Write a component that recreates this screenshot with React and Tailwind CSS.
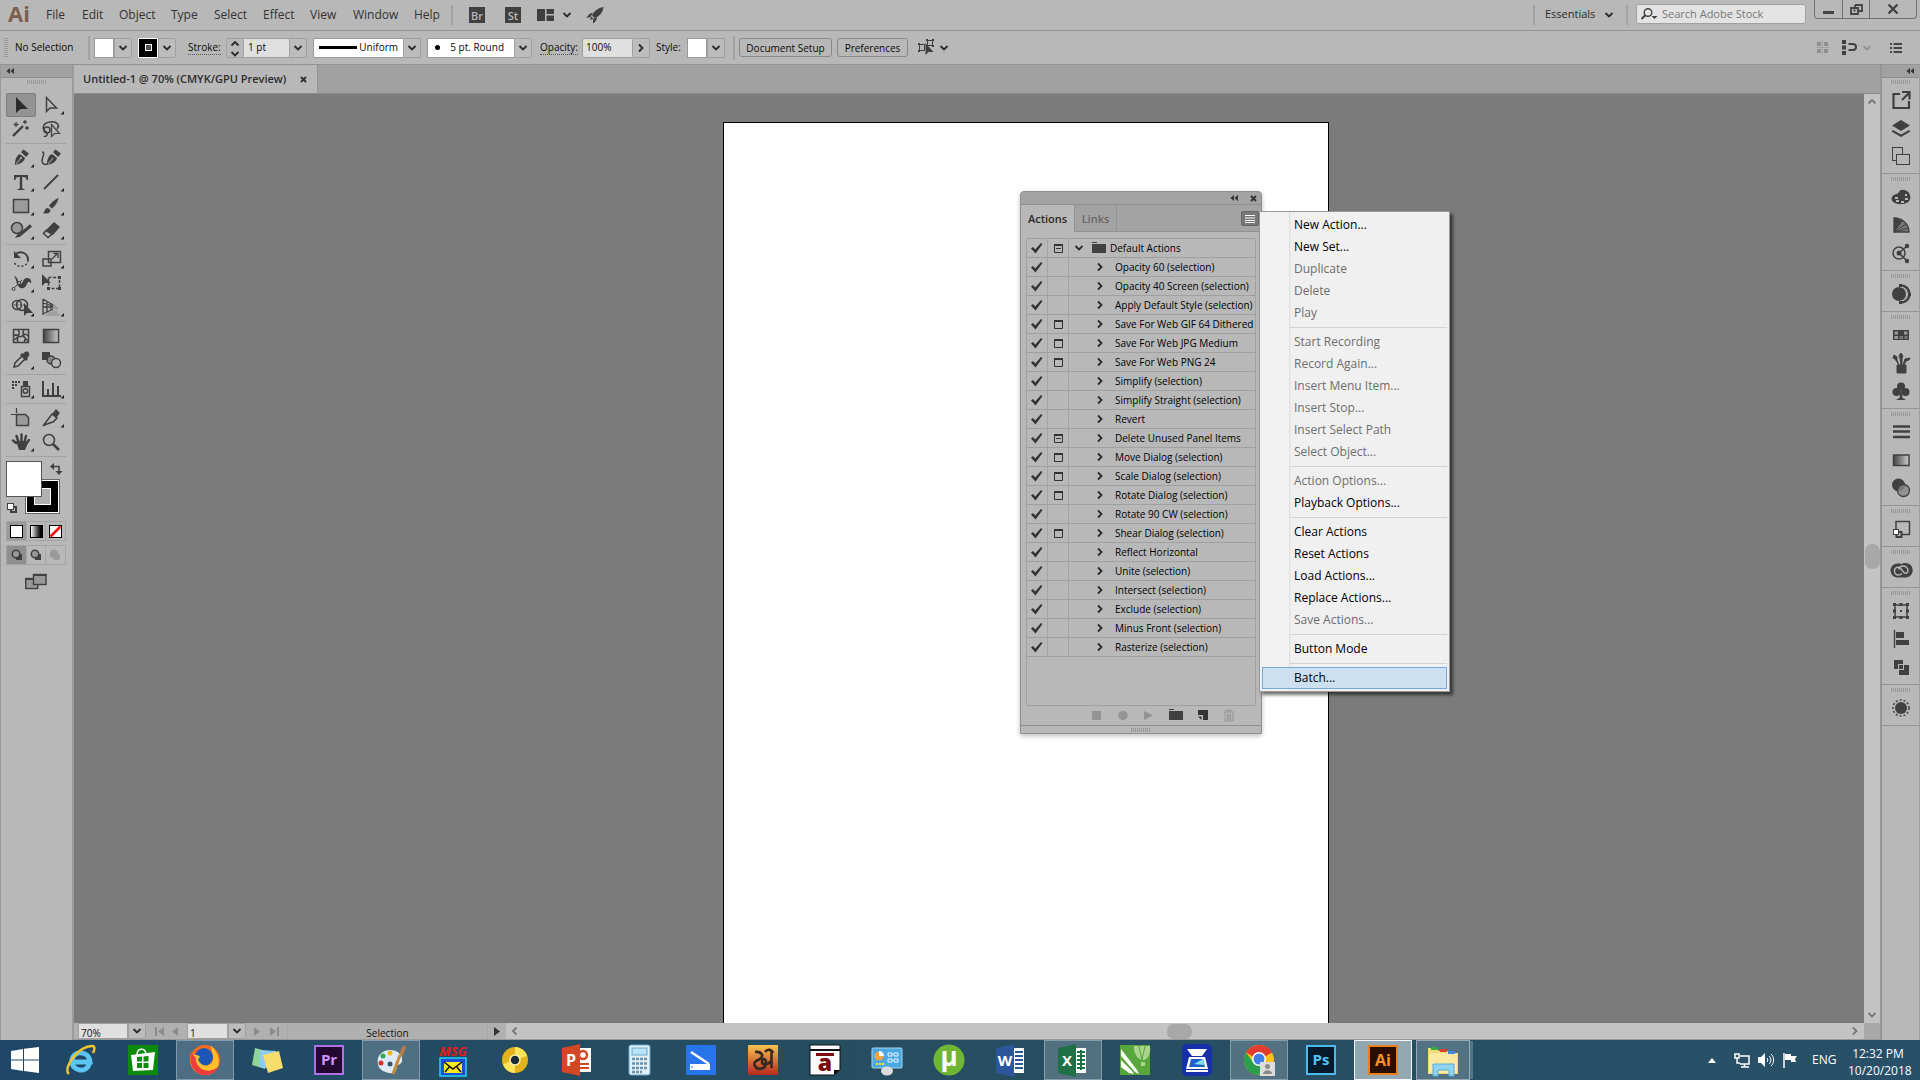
import React from "react";

const ink = "#404040";

function Svg({ w = 24, h = 24, className = "", children }) {
  return (
    <svg width={w} height={h} viewBox={`0 0 ${w} ${h}`} className={`shrink-0 overflow-visible ${className}`} fill="none" aria-hidden="true">
      {children}
    </svg>
  );
}

function Chevron({ dir = "down", color = "#2b2b2b" }) {
  const d = {
    down: "M1.5 3l3.5 3.5L8.5 3",
    up: "M1.5 6.500L5 3l3.500 3.500",
    right: "M3 1.500L6.500 5 3 8.500",
    left: "M6.500 1.500L3 5l3.500 3.500",
  }[dir];
  return (
    <Svg w={10} h={10}>
      <path d={d} stroke={color} strokeWidth="1.8" />
    </Svg>
  );
}

function DoubleLeft() {
  return (
    <Svg w={8} h={6}>
      <path d="M4 0v6L0.500 3zM8 0v6L4.500 3z" fill="#333" />
    </Svg>
  );
}

function Grip({ className = "" }) {
  return (
    <Svg w={20} h={4} className={className}>
      <path d="M0.5 0v4M2.5 0v4M4.5 0v4M6.500 0v4M8.500 0v4M10.500 0v4M12.500 0v4M14.500 0v4M16.500 0v4M18.500 0v4" stroke="#989898" />
    </Svg>
  );
}

function Sep({ className = "" }) {
  return <span className={`w-0.5 shrink-0 bg-[#a3a3a3] ${className}`} />;
}

/* ---------- Menu bar ---------- */

const menus = [
  ["File", "w-9"],
  ["Edit", "w-[37px]"],
  ["Object", "w-[52px]"],
  ["Type", "w-[43px]"],
  ["Select", "w-[49px]"],
  ["Effect", "w-[47px]"],
  ["View", "w-[43px]"],
  ["Window", "w-[61px]"],
  ["Help", "w-[37px]"],
];

function MenuBar() {
  return (
    <header className="flex h-[31px] shrink-0 items-start justify-between border-b border-[#939393] bg-[#b8b8b8]">
      <div className="flex h-[30px] items-center">
        <span className="w-[46px] pb-1 pl-2 text-[22px] leading-6 font-bold text-[#7d5f50]">Ai</span>
        <nav className="flex">
          {menus.map(([name, width]) => (
            <button key={name} className={`${width} text-left text-xs text-[#333]`}>{name}</button>
          ))}
        </nav>
        <Sep className="h-5" />
        <button className="ml-4 flex size-4 items-center justify-center bg-[#404040] text-[11px] leading-none font-semibold text-[#b8b8b8]">Br</button>
        <button className="ml-5 flex size-4 items-center justify-center bg-[#404040] text-[11px] leading-none font-semibold text-[#b8b8b8]">St</button>
        <button aria-label="Arrange documents" className="ml-4 flex items-center gap-2">
          <Svg w={17} h={12}>
            <path d="M0 0h8v12H0zM9.500 0H17v5H9.500zM9.500 6.500H17V12H9.500z" fill={ink} />
          </Svg>
          <Chevron />
        </button>
        <button aria-label="GPU performance" className="ml-3.5">
          <Svg w={18} h={18}>
            <path d="M17.500 1C12 2 8 5 6 9.500l2.500 2.500C14 10 17 6 17.500 1z" fill={ink} />
            <path d="M7 6.500C4 7 2 9 0.500 12l4-1zM11 11c0 3-1.500 5-4 6.500l0-4.500z" fill={ink} />
            <path d="M5 10.500L4 14l3.500-1.500z" fill={ink} />
          </Svg>
        </button>
      </div>
      <div className="flex items-start">
        <Sep className="mt-[5px] h-5" />
        <label className="relative mt-1 ml-2.5 flex h-5 items-center text-[11px] text-[#2b2b2b]">
          <select aria-label="Workspace" className="w-[69px] appearance-none bg-transparent leading-5">
            <option>Essentials</option>
          </select>
          <span className="pointer-events-none absolute top-1.5 right-0"><Chevron /></span>
        </label>
        <Sep className="mt-[5px] ml-3 h-5" />
        <label className="mt-1 ml-2 flex h-5 w-[170px] items-center rounded-[3px] border border-[#a0a0a0] bg-[#e3e3e3] pl-1">
          <Svg w={17} h={13}>
            <circle cx="7" cy="4.500" r="3.800" stroke={ink} strokeWidth="1.400" />
            <path d="M4.500 7L0.500 11" stroke={ink} strokeWidth="2" />
            <path d="M10.500 8h6l-3 3z" fill={ink} />
          </Svg>
          <input placeholder="Search Adobe Stock" className="ml-1 w-0 grow bg-transparent text-[11px] outline-none placeholder:text-[#777]" />
        </label>
        <div className="mr-[3px] ml-2 flex h-[19px] rounded-b border border-t-0 border-[#707070]">
          <button aria-label="Minimize" className="flex w-7 items-end justify-center border-r border-[#707070] pb-1">
            <span className="h-[3px] w-[11px] bg-[#444]" />
          </button>
          <button aria-label="Restore" className="flex w-[27px] items-center justify-center border-r border-[#707070]">
            <Svg w={13} h={11}>
              <path d="M5 1h7v6H8.500M5 1v2M1 4h7v6H1zM3.500 6.500h2" stroke="#444" strokeWidth="1.800" />
            </Svg>
          </button>
          <button aria-label="Close" className="flex w-[46px] items-center justify-center">
            <Svg w={12} h={10}>
              <path d="M1.500 0.500l9 9M10.500 0.500l-9 9" stroke="#444" strokeWidth="2.400" />
            </Svg>
          </button>
        </div>
      </div>
    </header>
  );
}

/* ---------- Control bar ---------- */

function Drop({ label, dir = "down" }) {
  return (
    <button aria-label={label} className="flex w-[18px] items-center justify-center rounded-r-[2px] border border-[#a0a0a0] bg-[#bcbcbc]">
      <Chevron dir={dir} />
    </button>
  );
}

function ControlBar() {
  return (
    <div className="flex h-[34px] shrink-0 items-center justify-between border-b border-[#939393] bg-[#b8b8b8] text-[10px] text-[#0a0a0a]">
      <div className="flex h-5 items-center">
        <Svg w={4} h={20} className="ml-1">
          <path d="M0 .5h4M0 2.500h4M0 4.500h4M0 6.500h4M0 8.500h4M0 10.500h4M0 12.500h4M0 14.500h4M0 16.500h4M0 18.500h4" stroke="#9a9a9a" />
        </Svg>
        <span className="w-20 pl-[7px] whitespace-nowrap">No Selection</span>
        <Sep className="-my-1 h-6" />
        <div className="ml-1 flex h-5">
          <button aria-label="Fill" className="w-5 border border-[#999] bg-white" />
          <Drop label="Fill options" />
        </div>
        <div className="ml-1.5 flex h-5">
          <button aria-label="Stroke colour" className="flex w-5 items-center justify-center border border-white bg-black">
            <span className="size-[7px] border border-white bg-[#555]" />
          </button>
          <Drop label="Stroke options" />
        </div>
        <label htmlFor="stroke" className="ml-3 w-[38px]"><span className="border-b border-dotted border-[#555]">Stroke:</span></label>
        <div className="flex h-5">
          <button aria-label="Adjust stroke" className="flex w-[18px] flex-col items-center justify-between rounded-l-[2px] border border-[#a0a0a0]">
            <Chevron dir="up" />
            <Chevron />
          </button>
          <input id="stroke" defaultValue="1 pt" className="w-[45px] border-y border-[#a0a0a0] bg-[#e0e0e0] px-1 outline-none" />
          <Drop label="Stroke weights" />
        </div>
        <div className="ml-1.5 flex h-5">
          <button className="flex w-[90px] items-center justify-between border border-r-0 border-[#999] bg-white px-[5px]">
            <span className="h-[3px] w-[38px] bg-black" />
            Uniform
          </button>
          <Drop label="Width profiles" />
        </div>
        <div className="ml-1.5 flex h-5">
          <button className="flex w-[87px] items-center justify-between border border-r-0 border-[#999] bg-white pr-2.5 pl-[7px]">
            <span className="size-[5px] rounded-full bg-black" />
            5 pt. Round
          </button>
          <Drop label="Brushes" />
        </div>
        <label htmlFor="opacity" className="ml-2 w-[42px]"><span className="border-b border-dotted border-[#555]">Opacity:</span></label>
        <div className="flex h-5">
          <input id="opacity" defaultValue="100%" className="w-[50px] rounded-l-[2px] border border-r-0 border-[#a0a0a0] bg-[#e0e0e0] px-[3px] outline-none" />
          <Drop label="Opacity slider" dir="right" />
        </div>
        <span className="ml-1.5 w-[31px]">Style:</span>
        <div className="flex h-5">
          <button aria-label="Graphic style" className="w-5 border border-[#999] bg-white" />
          <Drop label="Graphic styles" />
        </div>
        <Sep className="ml-2 h-6" />
        <button className="ml-1 h-[19px] w-[93px] rounded-[3px] border border-[#888] leading-none">Document Setup</button>
        <button className="ml-[5px] h-[19px] w-[71px] rounded-[3px] border border-[#888] leading-none">Preferences</button>
        <button aria-label="Select similar" className="ml-2.5 flex items-center gap-1">
          <Svg w={17} h={17}>
            <path d="M1.500 5.500h5v6h-5zM9.500 1.500h5v5h-5z" stroke={ink} />
            <path d="M0 4h2v2H0zM0 11h2v2H0zM8 0h2v2H8zM14 0h2v2h-2zM14 6h2v2h-2z" fill={ink} />
            <path d="M7.500 4v12l3-3h5z" fill={ink} />
          </Svg>
          <Chevron />
        </button>
      </div>
      <div className="flex items-center pr-[18px]">
        <Svg w={15} h={15}>
          <path d="M2 2h4v4H2zM9 2h4v4H9zM2 9h4v4H2zM9 9h4v4H9z" fill="#8e8e8e" />
          <path d="M7.500 0v15M0 7.500h15" stroke="#a2a2a2" />
        </Svg>
        <Svg w={16} h={15} className="ml-3">
          <path d="M0 0h4v4H0zM0 5.500h4v4H0zM0 11h4v4H0z" fill={ink} />
          <path d="M6.500 4H11a3 3 0 010 6H6.500" stroke={ink} strokeWidth="2" />
        </Svg>
        <span className="ml-1"><Chevron color="#909090" /></span>
        <Svg w={12} h={10} className="ml-[18px]">
          <path d="M0 1h2M0 5h2M0 9h2M3.500 1H12M3.500 5H12M3.500 9H12" stroke="#222" strokeWidth="1.400" />
        </Svg>
      </div>
    </div>
  );
}

/* ---------- Tools ---------- */

const s = { stroke: ink, strokeWidth: 1.5 };
const nib = "M6 19c0-5 1-9 5-11l5 4c-1 4-5 6-10 7zM12 6l2.500-2.500L20 7.500 17 11z";

const toolGroups = [
  [
    ["Selection", <path d="M7 4v16l4.500-4H19z" fill="#2b2b2b" />, 0],
    ["Direct selection", <path d="M7.500 4.500v14l3.500-3.500h6.500z" {...s} />, 1],
    ["Magic wand", <><path d="M4 19L14 9" {...s} strokeWidth="2.400" /><path d="M7 5v5M4.500 7.500h5M16 3v4M14 5h4M18 9v4M16 11h4" {...s} strokeWidth="1.300" /></>, 0],
    ["Lasso", <><path d="M8 15C3 14 2 6 11 5c8-1 10 4 7 7" {...s} /><circle cx="8" cy="13" r="3" {...s} /><path d="M8 16c1 3-2 4-3 3" {...s} /><path d="M12.500 7.500v12l3-3h5z" fill="#b8b8b8" {...s} strokeWidth="1.200" /></>, 0],
  ],
  [
    ["Pen", <><path d={nib} fill={ink} /><path d="M7 18l5-6" stroke="#b8b8b8" /><circle cx="12" cy="12" r="1" fill="#b8b8b8" /></>, 1],
    ["Curvature", <><g transform="translate(2 0)"><path d={nib} fill={ink} /><path d="M7 18l5-6" stroke="#b8b8b8" /></g><path d="M3 6c4 0 0 5 0 9 0 3 3 4 5 3" {...s} /></>, 0],
    ["Type", <path d="M5 5h14v5h-1.500c0-2-1-3-3-3h-1.300v10.500c0 1 1 1.500 2.300 1.500v1h-7v-1c1.300 0 2.300-.5 2.300-1.500V7H9.500c-2 0-3 1-3 3H5z" fill={ink} />, 1],
    ["Line segment", <path d="M5 19L19 5" {...s} strokeWidth="1.800" />, 1],
    ["Rectangle", <rect x="4.500" y="5.500" width="15" height="13" fill="#9b9b9b" {...s} />, 1],
    ["Paintbrush", <><path d="M19.500 4c-3 1-8 5-9.500 8l3 2.500c3-2 6-7 6.500-10.500z" fill={ink} /><path d="M4 19c2-1 1-5 5-5l2.500 2c0 4-5 4-7.500 3z" fill={ink} /></>, 1],
    ["Shaper", <><circle cx="8" cy="10" r="5.500" fill="#999" {...s} /><path d="M10 17.500l12-10" stroke={ink} strokeWidth="3" /><path d="M6 20l3-4.500 2.500 3z" fill={ink} /></>, 1],
    ["Eraser", <><path d="M7 12l8-8 6 5-7 8z" fill={ink} /><path d="M7 12.500l-2.500 3 4.500 4 4-3.500z" {...s} /></>, 1],
  ],
  [
    ["Rotate", <><path d="M6 8c4-5 13-3 13 5" {...s} strokeWidth="2" /><path d="M5 4v7h7z" fill={ink} /><path d="M19 13c0 7-11 9-14 2" {...s} strokeDasharray="2 2" /></>, 1],
    ["Scale", <><rect x="9.500" y="4.500" width="12" height="11" {...s} /><rect x="4" y="12" width="8" height="7" {...s} /><path d="M13 12l5-5M14.500 6.500H19V11" {...s} strokeWidth="1.300" /></>, 1],
    ["Width", <><path d="M5 5c5 1 4 9 7 8 2-1 2-6 6-6 3 0 5 2 4 6-1-3-3-3-4 0-2 5-6 5-8 3-3-2-2-7-5-11z" fill={ink} /><path d="M4 18l9-9" {...s} strokeWidth="1" /><circle cx="4.500" cy="18" r="1.500" fill="#b8b8b8" {...s} strokeWidth="1" /><circle cx="10" cy="12" r="1.500" fill="#b8b8b8" {...s} strokeWidth="1" /></>, 1],
    ["Free transform", <><rect x="9.500" y="6.500" width="11" height="11" {...s} strokeDasharray="3 1.500" /><path d="M3 3v12l3-3h6z" fill={ink} /><path d="M19 5h3v3h-3zM19 16h3v3h-3zM8 16h3v3H8z" fill={ink} /></>, 0],
    ["Shape builder", <><circle cx="8" cy="10" r="4.500" {...s} /><circle cx="13" cy="10" r="5.500" {...s} /><path d="M5 10h10" stroke={ink} strokeDasharray="1.500 1.500" /><path d="M15 8v13l3-3h6z" fill={ink} /></>, 1],
    ["Perspective grid", <><path d="M4 4v16M8 6v11M12 8v7M4 4l10 6M4 12h10M4 19l10-5M4 8l10 3" {...s} strokeWidth="1.300" /><path d="M12 16h6M9 18h10M7 20h14" stroke="#858585" strokeWidth="1.200" /><path d="M14 8l6 6h-6z" fill="#999" /></>, 1],
  ],
  [
    ["Mesh", <><rect x="4.500" y="5.500" width="15" height="13" {...s} /><path d="M5 12c3-4 5 3 8 0s4-2 6 0M9 6c4 4-3 8 0 12M15 6c-4 4 4 8 0 12M5 16l5-4M14 12l5 5" {...s} /></>, 0],
    ["Gradient", <rect x="4.500" y="5.500" width="15" height="13" fill="url(#tool-grad)" {...s} />, 0],
    ["Eyedropper", <><path d="M5 19l1-4 7-7 3 3-7 7z" {...s} /><path d="M11 7l2-2 1 1c2-3 5-3 6-1 1 1 0 4-2 5l1 1-2 2z" fill={ink} /></>, 1],
    ["Blend", <><rect x="3" y="4" width="8" height="8" fill={ink} /><circle cx="12" cy="12" r="4" fill="#888" {...s} /><circle cx="17" cy="15" r="4.500" fill="#b8b8b8" {...s} /></>, 0],
  ],
  [
    ["Symbol sprayer", <><path d="M3 4h2v2H3zM6 4h2v2H6zM9 4h2v2H9zM3 7h2v2H3zM6 7h2v2H6zM3 10h2v2H3z" fill={ink} /><path d="M12.500 9.500h8v10h-8z" {...s} /><path d="M14 4h5v5h-5z" fill={ink} /><circle cx="16.500" cy="14" r="2.200" {...s} /></>, 1],
    ["Column graph", <path d="M4 4v15h18M9 19v-7M14 19V6M19 19V9" {...s} strokeWidth="2" />, 1],
  ],
  [
    ["Artboard", <><path d="M7.500 8.500h9l3 3v8h-12z" fill="#9b9b9b" {...s} /><path d="M7.500 2v5M2 8.500h5" {...s} strokeWidth="1.200" /></>, 0],
    ["Slice", <><path d="M4 20L13 8l5 4-4 4c-3 1-7 2-10 4z" {...s} /><path d="M13 8l4-5 4 4-4 5z" fill={ink} /></>, 1],
    ["Hand", <><path d="M7 13l-3-2.500M9.500 12L7.500 6M12.500 11V4.500M15.500 12l1.500-6M17 14l3-4" stroke={ink} strokeWidth="2.400" strokeLinecap="round" /><path d="M7 11h10l2 2-3 7H10z" fill={ink} /></>, 1],
    ["Zoom", <><circle cx="10" cy="10" r="5.500" {...s} /><path d="M14 14l6 6" {...s} strokeWidth="2.600" /></>, 0],
  ],
];

function PanelHeader({ align }) {
  return (
    <div className={`flex h-[13px] w-full shrink-0 items-center border-b border-[#8f8f8f] bg-[#a1a1a1] px-[5px] ${align}`}>
      <button aria-label="Collapse panels" className="flex"><DoubleLeft /></button>
    </div>
  );
}

function Toolbar() {
  return (
    <aside className="flex w-[74px] shrink-0 flex-col border-r-2 border-l border-r-[#9b9b9b] border-l-[#999] bg-[#b8b8b8]">
      <PanelHeader align="justify-start" />
      <Grip className="mt-0.5 mb-[9px] self-center" />
      <div className="ml-[5px] w-[60px]">
        {toolGroups.map((group, i) => (
          <div key={i} className="mb-0.5 grid grid-cols-2 border-b border-[#a2a2a2] pb-0.5">
            {group.map(([name, art, more], j) => (
              <button
                key={name}
                aria-label={name}
                className={i === 0 && j === 0 ? "h-6 rounded-[2px] bg-[#939393] outline outline-1 -outline-offset-1 outline-[#7f7f7f]" : "h-6"}
              >
                <Svg w={30} h={24}>
                  <g transform="translate(3 0)">{art}</g>
                  {more === 1 && <path d="M28 18v3.500h-3.500z" fill="#222" />}
                </Svg>
              </button>
            ))}
          </div>
        ))}
        <Svg w={60} h={56}>
          <rect x="19.500" y="20.500" width="34" height="34" fill="#000" stroke="#666" />
          <rect x="20.500" y="21.500" width="32" height="32" stroke="#fff" />
          <rect x="28.500" y="29.500" width="16" height="16" fill="#b0b0b0" stroke="#fff" />
          <rect x="0.500" y="2.500" width="35" height="35" fill="#fff" stroke="#555" />
          <path d="M47 7.500h6v5" stroke={ink} strokeWidth="1.600" />
          <path d="M48 4v7l-4-3.500zM49.500 12h7L53 16z" fill={ink} />
          <rect x="5" y="48" width="5" height="5" stroke={ink} strokeWidth="2" />
          <rect x="1.500" y="44.500" width="6" height="6" fill="#fff" stroke={ink} />
        </Svg>
        <div className="mt-1.5 flex h-5 border border-[#a4a4a4]">
          <button aria-label="Color" className="flex w-[19px] items-center justify-center bg-[#999]"><span className="size-[13px] border border-black bg-white" /></button>
          <button aria-label="Gradient fill" className="flex w-5 items-center justify-center border-x border-[#a8a8a8]"><span className="size-[13px] border border-black bg-linear-to-r from-white to-black" /></button>
          <button aria-label="No fill" className="flex w-[19px] items-center justify-center">
            <Svg w={13} h={13}>
              <rect x=".5" y=".5" width="12" height="12" fill="#fff" stroke="#000" />
              <path d="M1.500 11.500l10-10" stroke="#e11" strokeWidth="2.600" />
            </Svg>
          </button>
        </div>
        <div className="mt-1 flex h-5 border border-[#a4a4a4]">
          {[["Draw normal", "bg-[#8f8f8f]", ink], ["Draw behind", "border-x border-[#a8a8a8]", ink], ["Draw inside", "", "#9c9c9c"]].map(([name, cls, c]) => (
            <button key={name} aria-label={name} className={`flex w-5 items-center justify-center ${cls}`}>
              <Svg w={12} h={12}>
                <rect x="5" y="5" width="6" height="6" fill={c} />
                <circle cx="5" cy="5" r="3.700" fill="#999" stroke={c} strokeWidth="1.500" />
              </Svg>
            </button>
          ))}
        </div>
        <button aria-label="Screen mode" className="mx-auto mt-2 block">
          <Svg w={22} h={17}>
            <rect x=".7" y="5.500" width="12" height="10" fill="#999" stroke={ink} strokeWidth="1.400" />
            <rect x="8.500" y="1.500" width="12.500" height="10" fill="#999" stroke={ink} strokeWidth="1.400" />
            <path d="M8 2h13.500M0 6h8" stroke={ink} strokeWidth="2" />
          </Svg>
        </button>
      </div>
      <svg width="0" height="0" className="absolute" aria-hidden="true">
        <defs>
          <linearGradient id="tool-grad"><stop stopColor="#444" /><stop offset="1" stopColor="#ccc" /></linearGradient>
        </defs>
      </svg>
    </aside>
  );
}

/* ---------- Right dock ---------- */

const dockGroups = [
  [
    ["Export", <path d="M9 4H2.500v14H18v-7M11 2h7.500v7.500M18 3l-7 7" stroke={ink} strokeWidth="2.200" />],
    ["Layers", <path d="M10 2l9 5.500-9 5.500-9-5.500zM2 12l8 4.500 8-4.500 1.500 1.500L10 19 .5 13.500z" fill={ink} />],
    ["Artboards", <><rect x="1.500" y="1.500" width="10" height="13" stroke={ink} /><rect x="5.500" y="8.500" width="13" height="10" fill="#b8b8b8" stroke={ink} /></>],
  ],
  [
    ["Color", <><path d="M8 5c1-3 7-3 10 1 3 5 1 10-6 11C4 18-1 14 1 10c1-3 5-2 7-5z" fill={ink} /><path d="M4 10h3v2H4zM5 13h3v2H5zM10 14h3v2h-3zM14 11h3v2h-3zM14 7h2v2h-2z" fill="#b8b8b8" /></>],
    ["Color guide", <><path d="M3 3c8 0 15 6 15 14H3z" fill="#777" stroke={ink} strokeWidth="1.300" /><path d="M3 17V3l4 1zM3 17L7 4l4 2z" fill={ink} /><path d="M3 17L11 6M3 17L15 9M3 17l15-4" stroke={ink} /></>],
    ["Color themes", <><circle cx="8" cy="10" r="6" stroke={ink} strokeWidth="1.500" /><circle cx="8" cy="10" r="2.500" fill={ink} /><path d="M8 10l8-7M8 10l8 8" stroke={ink} strokeWidth="1.500" /><circle cx="16" cy="3" r="2.200" fill={ink} /><circle cx="16" cy="18" r="2.200" fill={ink} /></>],
  ],
  [
    ["Recolor", <><circle cx="8" cy="10" r="7" fill={ink} /><path d="M9 2c12 0 12 16 0 16" stroke={ink} strokeWidth="3.500" /><path d="M9 3c10 0 10 14 0 14" stroke="#b8b8b8" strokeWidth="1.200" /><path d="M8 0h3v3H8zM17 9h3v3h-3zM8 17h3v3H8z" fill={ink} /></>],
  ],
  [
    ["Swatches", <><path d="M2 5h16v10H2z" fill={ink} /><path d="M3.500 6.500h3.500v3H3.500zM3.500 11H7v3H3.500zM13 6.500h3.500v3H13z" fill="#999" /><path d="M8.500 11H12v3H8.500zM13.500 11h3v3h-3z" fill="#777" /></>],
    ["Brushes", <path d="M6 12h9v8H6zM8 12L4 6 2 5l1-3 3 2 0 3zM10 12L9 5l-1-2 2-3 2 3-1 2 0 6zM12 12l2-6 5-1-1 2-3 1-2 4z" fill={ink} stroke={ink} />],
    ["Symbols", <><circle cx="10" cy="5.500" r="4" fill={ink} /><circle cx="5.500" cy="11" r="4" fill={ink} /><circle cx="14.500" cy="11" r="4" fill={ink} /><path d="M9.500 9h1l1 8 3 1.500v.5h-9v-.5l3-1.500z" fill={ink} /></>],
  ],
  [
    ["Stroke", <path d="M2 4.500h17M2 9.500h17M2 15h17" stroke={ink} strokeWidth="2.400" />],
    ["Gradient", <rect x="2.500" y="5" width="15.500" height="10.500" fill="url(#tool-grad)" stroke={ink} strokeWidth="1.500" />],
    ["Transparency", <><circle cx="7.500" cy="7" r="6.500" fill={ink} /><circle cx="12.500" cy="12.500" r="6" fill="#888" fillOpacity=".8" stroke={ink} strokeWidth="1.300" /></>],
  ],
  [
    ["Appearance", <><path d="M5 10V2.500h13.500v13H11" stroke={ink} strokeWidth="1.500" /><rect x="5.500" y="13" width="5" height="5" stroke={ink} strokeWidth="2" /><rect x="2.500" y="10.500" width="5" height="5" fill="#fff" stroke={ink} /></>],
  ],
  [
    ["Libraries", <><path d="M6.500 3.500a7 7 0 000 14h8a7 7 0 000-14.500c-2 0-3 .5-4 1-1-.4-2-.5-4-.5z" fill={ink} /><path d="M11 13.500c-2 2-7 2.500-7.500-2S8 6 10 9l3 3.500c1.500 1.500 4 .5 4-2s-2.500-4.500-5-4.500-4 2-4.500 3.500" stroke="#b8b8b8" strokeWidth="1.400" /></>],
  ],
  [
    ["Transform", <><rect x="4" y="4" width="12" height="12" stroke={ink} strokeWidth="1.500" /><path d="M2 2h3v3H2zM8.500 2h3v3h-3zM15 2h3v3h-3zM2 8.500h3v3H2zM15 8.500h3v3h-3zM2 15h3v3H2zM8.500 15h3v3h-3zM15 15h3v3h-3zM9 9h2v2H9z" fill={ink} /></>],
    ["Align", <><path d="M3.500 1v18" stroke={ink} strokeWidth="1.400" /><path d="M5 3h8v6H5zM5 11h13v5H5z" fill={ink} /></>],
    ["Pathfinder", <><path d="M3 3h9v4h-5v5H3zM13 8h5v10H8v-5h5z" fill={ink} /><path d="M8 8h4v4H8z" fill={ink} /></>],
  ],
  [
    ["Graphic styles", <><circle cx="10" cy="10" r="6" fill={ink} /><circle cx="10" cy="10" r="8" stroke={ink} strokeWidth="1.500" strokeDasharray="2 2" /></>],
  ],
];

function Dock() {
  return (
    <aside className="flex w-10 shrink-0 flex-col items-center border-r border-l-2 border-r-[#a0a0a0] border-l-[#959595] bg-[#b8b8b8]">
      <PanelHeader align="justify-end" />
      {dockGroups.map((group, i) => (
        <div key={i} className={i === 0 ? "flex w-full flex-col items-center border-b border-[#959595] pt-0.5 pb-[3px]" : "flex w-full flex-col items-center border-b border-[#959595] py-[3px]"}>
          <Grip className="mb-0.5" />
          {group.map(([name, art]) => (
            <button key={name} aria-label={name} className="flex h-7 items-center justify-center">
              <Svg w={20} h={20}>{art}</Svg>
            </button>
          ))}
        </div>
      ))}
    </aside>
  );
}

/* ---------- Document ---------- */

function Document() {
  return (
    <main className="flex min-w-0 grow flex-col">
      <div className="flex h-[29px] shrink-0 border-b border-[#8b8b8b] bg-[#a1a1a1]">
        <div className="flex w-[244px] items-center justify-between border-r border-[#959595] bg-[#b8b8b8] pt-px pr-2.5 pl-[9px] text-[11px] font-semibold whitespace-nowrap text-[#2b2b2b]">
          Untitled-1 @ 70% (CMYK/GPU Preview)
          <button aria-label="Close document">
            <Svg w={7} h={7}><path d="M1 1l5 5M6 1L1 6" stroke="#333" strokeWidth="2" /></Svg>
          </button>
        </div>
      </div>
      <div className="flex min-h-0 grow">
        <div className="relative grow overflow-hidden bg-[#7b7b7b]">
          <div className="absolute top-7 bottom-0 left-[649px] w-[606px] border border-b-0 border-black bg-white" />
        </div>
        <div className="flex w-4 shrink-0 flex-col items-center justify-between bg-[#c3c3c3] py-[3px]">
          <button aria-label="Scroll up"><Chevron dir="up" color="#777" /></button>
          <span className="mb-1 h-[25px] w-[15px] rounded-[7px] bg-[#a8a8a8]" />
          <button aria-label="Scroll down"><Chevron color="#777" /></button>
        </div>
      </div>
      <div className="flex h-[17px] shrink-0 items-stretch overflow-hidden border-b border-[#999] bg-[#b0b0b0] text-[10px] text-[#111]">
        <input aria-label="Zoom level" defaultValue="70%" className="ml-1 w-[50px] border border-[#a0a0a0] bg-[#e0e0e0] px-0.5 pt-1 leading-none outline-none" />
        <Drop label="Zoom levels" />
        <div className="flex w-[41px] items-center justify-center gap-2">
          <Svg w={9} h={9}><path d="M1 0v9" stroke="#8c8c8c" strokeWidth="2" /><path d="M9 0v9L3 4.500z" fill="#8c8c8c" /></Svg>
          <Svg w={6} h={9}><path d="M6 0v9L0 4.500z" fill="#8c8c8c" /></Svg>
        </div>
        <input aria-label="Artboard number" defaultValue="1" className="w-[41px] border border-[#a0a0a0] bg-[#e0e0e0] px-0.5 pt-1 leading-none outline-none" />
        <Drop label="Artboards" />
        <div className="flex w-[42px] items-center justify-center gap-2.5 border-r border-[#a8a8a8]">
          <Svg w={6} h={9}><path d="M0 0v9l6-4.500z" fill="#8c8c8c" /></Svg>
          <Svg w={9} h={9}><path d="M8 0v9" stroke="#8c8c8c" strokeWidth="2" /><path d="M0 0v9l6-4.500z" fill="#8c8c8c" /></Svg>
        </div>
        <div className="flex w-[200px] items-end justify-center border-r border-[#a8a8a8] leading-3">Selection</div>
        <button aria-label="Status options" className="flex w-[18px] items-center justify-center">
          <Svg w={6} h={9}><path d="M0 0v9l6-4.500z" fill="#333" /></Svg>
        </button>
        <div className="flex grow items-center justify-between bg-[#c3c3c3] px-1">
          <button aria-label="Scroll left"><Chevron dir="left" color="#777" /></button>
          <span className="mr-3 h-[15px] w-[25px] rounded-[7px] bg-[#a8a8a8]" />
          <button aria-label="Scroll right"><Chevron dir="right" color="#777" /></button>
        </div>
        <div className="w-4 shrink-0 bg-[#a9a9a9]" />
      </div>
    </main>
  );
}

/* ---------- Actions panel ---------- */

const actions = [
  ["Opacity 60 (selection)", 0],
  ["Opacity 40 Screen (selection)", 0],
  ["Apply Default Style (selection)", 0],
  ["Save For Web GIF 64 Dithered", 1],
  ["Save For Web JPG Medium", 1],
  ["Save For Web PNG 24", 1],
  ["Simplify (selection)", 0],
  ["Simplify Straight (selection)", 0],
  ["Revert", 0],
  ["Delete Unused Panel Items", 2],
  ["Move Dialog (selection)", 1],
  ["Scale Dialog (selection)", 1],
  ["Rotate Dialog (selection)", 1],
  ["Rotate 90 CW (selection)", 0],
  ["Shear Dialog (selection)", 1],
  ["Reflect Horizontal", 0],
  ["Unite (selection)", 0],
  ["Intersect (selection)", 0],
  ["Exclude (selection)", 0],
  ["Minus Front (selection)", 0],
  ["Rasterize (selection)", 0],
];

function Folder() {
  return (
    <Svg w={14} h={12}>
      <path d="M0 2h14v9H0zM0 0h5v1H0z" fill={ink} />
    </Svg>
  );
}

function ActionRow({ name, dialog, root }) {
  return (
    <li className="flex h-[19px] border-b border-[#a0a0a0]">
      <label className="flex w-[21px] items-center justify-center border-r border-[#a4a4a4]">
        <input type="checkbox" defaultChecked aria-label={`Include ${name}`} className="peer sr-only" />
        <Svg w={12} h={11} className="opacity-0 peer-checked:opacity-100">
          <path d="M0 5.500l2-1.500 2.200 2.500L10 0l1.500 1L4.500 10.500z" fill="#333" />
        </Svg>
      </label>
      <label className="flex w-[21px] items-center justify-center border-r border-[#a4a4a4]">
        <input type="checkbox" defaultChecked={dialog > 0} aria-label={`Show dialog for ${name}`} className="peer sr-only" />
        <Svg w={9} h={9} className="opacity-0 peer-checked:opacity-100">
          <path d="M.5 1v7.500h8V1" stroke="#333" />
          <path d="M0 1h9" stroke="#333" strokeWidth="2" />
          {dialog === 2 && <path d="M2 4.500h5" stroke="#333" />}
        </Svg>
      </label>
      {root ? (
        <button className="flex grow items-center pl-[5px] text-left"><Chevron /><span className="mr-1 ml-2"><Folder /></span>{name}</button>
      ) : (
        <button className="flex grow items-center gap-2.5 pl-[26px] text-left whitespace-nowrap"><Chevron dir="right" />{name}</button>
      )}
    </li>
  );
}

function ActionsPanel() {
  return (
    <section aria-label="Actions" className="absolute top-[191px] left-[1020px] w-[242px] rounded-t-[4px] border border-[#8f8f8f] bg-[#b8b8b8] text-[10px] text-black shadow-[0_2px_5px_rgba(0,0,0,0.25)]">
      <div className="flex h-[13px] items-center justify-end gap-3 rounded-t-[3px] border-b border-[#8f8f8f] bg-[#a3a3a3] pr-1">
        <button aria-label="Collapse"><DoubleLeft /></button>
        <button aria-label="Close"><Svg w={7} h={7}><path d="M1 1l5 5M6 1L1 6" stroke="#333" strokeWidth="2" /></Svg></button>
      </div>
      <div className="flex h-[27px] items-stretch bg-[#a3a3a3] text-[11px] leading-none font-semibold">
        <button className="w-[53px] bg-[#b8b8b8] pb-px text-[#2b2b2b]">Actions</button>
        <button className="w-[43px] border-r border-b border-l border-[#939393] text-[#666]">Links</button>
        <div className="flex grow items-start justify-end border-b border-[#939393] pt-1.5 pr-0.5">
          <button aria-label="Panel menu" className="flex h-[15px] w-[18px] items-center justify-center rounded-[2px] border border-[#666] bg-[#777]">
            <Svg w={10} h={8}><path d="M0 .5h10M0 3h10M0 5.500h10M0 7.500h10" stroke="#fff" /></Svg>
          </button>
        </div>
      </div>
      <ul className="mt-1.5 mr-[5px] ml-[5px] h-[468px] rounded-[2px] border border-[#a0a0a0]">
        <ActionRow name="Default Actions" dialog={2} root />
        {actions.map(([name, dialog]) => (
          <ActionRow key={name} name={name} dialog={dialog} />
        ))}
      </ul>
      <div className="flex h-5 items-center justify-end gap-[14px] border-b border-[#8f8f8f] pr-[26px] pb-px">
        <button aria-label="Stop"><Svg w={12} h={12}><path d="M1 2h9v9H1z" fill="#949494" /></Svg></button>
        <button aria-label="Record"><Svg w={12} h={12}><circle cx="6" cy="6.500" r="4.700" fill="#949494" /></Svg></button>
        <button aria-label="Play"><Svg w={12} h={12}><path d="M1 2v9l9-4.500z" fill="#949494" /></Svg></button>
        <button aria-label="New set"><Folder /></button>
        <button aria-label="New action"><Svg w={12} h={12}><path d="M1 1h10v10H6V6H1z" fill="#333" /><path d="M1 7.500h3.500V11z" fill="#333" /></Svg></button>
        <button aria-label="Delete selection"><Svg w={12} h={13}><path d="M1 3h10M4 3V1h4v2M2 3v9h8V3M4.500 5v6M6 5v6M7.500 5v6" stroke="#949494" /></Svg></button>
      </div>
      <div className="flex h-[7px] items-center justify-center"><Grip /></div>
    </section>
  );
}

const menuGroups = [
  [["New Action...", 1], ["New Set...", 1], ["Duplicate", 0], ["Delete", 0], ["Play", 0]],
  [["Start Recording", 0], ["Record Again...", 0], ["Insert Menu Item...", 0], ["Insert Stop...", 0], ["Insert Select Path", 0], ["Select Object...", 0]],
  [["Action Options...", 0], ["Playback Options...", 1]],
  [["Clear Actions", 1], ["Reset Actions", 1], ["Load Actions...", 1], ["Replace Actions...", 1], ["Save Actions...", 0]],
  [["Button Mode", 1]],
  [["Batch...", 2]],
];

function PanelMenu() {
  const tone = [
    "text-[#6d6d6d] border-transparent",
    "text-black border-transparent",
    "text-black border-[#78a8dc] bg-[#cde0f2]",
  ];
  return (
    <div role="menu" className="absolute top-[211px] left-[1259px] w-[191px] border border-[#979797] bg-[#f0f0f0] bg-linear-to-r from-[#f2f2f2] from-[29px] via-[#dcdcdc] via-[29px] to-[#f0f0f0] to-[31px] p-0.5 text-xs shadow-[3px_3px_3px_rgba(0,0,0,0.55)]">
      {menuGroups.map((group, i) => (
        <div key={i} role="group">
          {i > 0 && <div className="ml-7 h-[7px] pt-[3px]"><div className="h-px bg-[#d4d4d4]" /></div>}
          {group.map(([name, state]) => (
            <button key={name} role="menuitem" disabled={state === 0} className={`block h-[22px] w-full border pl-[31px] text-left leading-5 ${tone[state]}`}>
              {name}
            </button>
          ))}
        </div>
      ))}
    </div>
  );
}

/* ---------- Taskbar ---------- */

function Tile({ x = 2, y = 2, w = 28, h = 28, fill, stroke, text, color, size = 15 }) {
  return (
    <>
      <rect x={x} y={y} width={w} height={h} fill={fill} stroke={stroke} strokeWidth={stroke ? 2 : 0} />
      <text x={x + w / 2} y={y + h / 2 + size * 0.36} textAnchor="middle" fontSize={size} fontWeight="700" fill={color}>{text}</text>
    </>
  );
}

function OfficeApp({ color, letter, rows }) {
  return (
    <>
      <path d="M17 4h12v25H17z" fill="#fff" />
      <path d={rows} stroke={color} strokeWidth="2" />
      <path d="M1 4l18-4v33L1 29z" fill={color} />
      <text x="10" y="22" textAnchor="middle" fontSize="15" fontWeight="700" fill="#fff">{letter}</text>
    </>
  );
}

const apps = [
  ["Internet Explorer", "", <><path d="M24 20c-2 9-17 8-17-3S24 6 25 18H9" stroke="#5cc5f2" strokeWidth="5" /><path d="M4 30C-3 24 14 2 27 2c4 0 2 5 1 7" stroke="#f2c230" strokeWidth="2.500" /></>],
  ["Store", "", <><rect x="1" y="1" width="30" height="30" fill="#0b8a0b" /><path d="M4 11l24-3-2 18-20 1z" fill="#fff" /><path d="M10 11c0-7 8-8 9-1" stroke="#fff" strokeWidth="1.500" /><path d="M10 13l5-.5v5h-5zM16.500 12.500l5-.5v5.500h-5zM10 19h5v5h-5zM16.500 19h5v5h-5z" fill="#0b8a0b" /></>],
  ["Firefox", "open", <><circle cx="16" cy="16" r="15" fill="#f36b21" /><circle cx="15" cy="13" r="9" fill="#1d55b8" /><path d="M22 2c12 10 10 28-5 29C4 31-1 20 2 8c2 3 3 3 6 3 3 1 4 2 1 4 3 9 13 8 15 1 1-5-2-9-2-14z" fill="#ffbf2b" /><path d="M2 8c-3 14 5 24 15 23 6 0 11-4 13-9-6 6-17 7-22-2-2-4 0-6-3-8z" fill="#ef3b3b" /></>],
  ["Sticky Notes", "", <><path d="M4 4l15 4-5 17-13-4z" fill="#8fd694" /><path d="M9 6l16 1-2 18-15-2z" fill="#8ecdf0" /><path d="M12 11l16-4 4 17-15 5z" fill="#f7dd6c" /></>],
  ["Premiere Pro", "", <Tile fill="#24082f" stroke="#b070e8" text="Pr" color="#d392ff" />],
  ["Paint", "open", <><path d="M3 14C7 3 25 4 27 14c1 6-3 6-5 8 0 9-8 8-14 5-5-3-6-8-5-13z" fill="#dcebf7" /><circle cx="8" cy="12" r="2.500" fill="#2fa84f" /><circle cx="15" cy="9" r="2.500" fill="#efb51e" /><circle cx="6" cy="19" r="2.500" fill="#d6332b" /><circle cx="15" cy="20" r="2.500" fill="#38566b" /><path d="M18 30l7-19" stroke="#c98a3c" strokeWidth="3" /><path d="M24 10l4-9 3 2-3 9z" fill="#b57a4a" /></>],
  ["MSG", "", <><text x="16" y="12" textAnchor="middle" fontSize="13" fontStyle="italic" fontWeight="700" fill="#e31b1b">MSG</text><rect x="3" y="14" width="26" height="18" fill="#1d4fd6" stroke="#1fd6f2" strokeWidth="1.500" /><path d="M7 18h18v11H7z" fill="#f6ec1f" /><path d="M7 18l9 7 9-7M8 28l5-6M24 28l-5-6" stroke="#111" strokeWidth="1.500" /></>],
  ["Disc", "", <><circle cx="16" cy="16" r="13" fill="#e3b21d" /><path d="M16 3a13 13 0 0112 9L16 16zM16 29a13 13 0 01-12-9l12-4z" fill="#fbe45a" /><circle cx="16" cy="16" r="5" fill="#1c2c38" stroke="#fff3b0" strokeWidth="1.500" /></>],
  ["PowerPoint", "", <><path d="M15 4h15v24H15z" fill="#fff" /><circle cx="22" cy="11" r="4" stroke="#d24726" strokeWidth="2.500" /><path d="M19 20h9M19 24h9" stroke="#d24726" strokeWidth="2" /><path d="M1 4l18-4v32L1 28z" fill="#d24726" /><text x="10" y="22" textAnchor="middle" fontSize="16" fontWeight="700" fill="#fff">P</text></>],
  ["Calculator", "", <><rect x="6" y="1" width="21" height="30" rx="2" fill="#e3f0f8" stroke="#6ba5cc" /><rect x="9" y="4" width="15" height="7" fill="#b9e3f7" stroke="#6ba5cc" /><path d="M9 15h15M9 19.500h15M9 24h15M9 28h10" stroke="#6a93ab" strokeWidth="2.500" strokeDasharray="3 1" /></>],
  ["Scanner", "", <><rect x="1" y="1" width="30" height="30" fill="#2874ea" /><path d="M6 8l18 12" stroke="#fff" strokeWidth="2.400" /><path d="M5 20h20v6H5z" fill="#fff" /><path d="M6 23h2" stroke="#2874ea" /></>],
  ["Bangla keyboard", "", <><rect x="1" y="1" width="30" height="30" rx="1" fill="url(#bk)" /><path d="M8 8c7-1 9 4 5 7-4 2-7 3-5 7 3 5 11 3 11-3 0-5-4-5-4-1 0 3 5 4 9-1M18 8c3-4 7-2 8 1M24.500 7v17" stroke="#352a22" strokeWidth="2.600" /></>],
  ["Font keyboard", "", <><path d="M1 1h30v25l-6 5H1z" fill="#fff" stroke="#111" /><path d="M1 6h30" stroke="#111" strokeWidth="2" /><path d="M7 10.500h18" stroke="#7a0c10" strokeWidth="3" /><text x="16" y="27" textAnchor="middle" fontSize="23" fontWeight="800" fill="#7a0c10">a</text><path d="M25 31v-5h6z" fill="#111" /></>],
  ["Control Panel", "", <><rect x="1" y="4" width="30" height="20" rx="1" fill="#4ba8e0" stroke="#a9d6ef" /><circle cx="8" cy="12" r="4.500" fill="#f2a43a" /><path d="M8 12V7a5 5 0 015 5z" fill="#fff" /><path d="M17 9h4v3h-4zM23 9h4v3h-4zM17 15h4v3h-4zM23 15h4v3h-4z" stroke="#e8f6ff" /><path d="M5 20h8" stroke="#ffe13a" strokeWidth="2" strokeDasharray="2 1" /><ellipse cx="16" cy="27" rx="6" ry="4.500" fill="#ddd" /></>],
  ["uTorrent", "", <><circle cx="16" cy="16" r="15.500" fill="#6fb536" /><text x="16" y="22" textAnchor="middle" fontSize="26" fontWeight="700" fill="#fff">µ</text></>],
  ["Word", "", <OfficeApp color="#2b579a" letter="W" rows="M20 8h8M20 12h8M20 16h8M20 20h8M20 24h8" />],
  ["Excel", "open", <OfficeApp color="#1e7145" letter="X" rows="M20 8h8M20 12h8M20 16h8M20 20h8M20 24h8M24 6v20" />],
  ["CorelDRAW", "", <><rect x="1" y="1" width="30" height="30" fill="#59a63c" /><path d="M2 5l16 21 2 4-4-2L2 12zM2 16l11 11 2 3-5-1-8-6z" fill="#fff" /><path d="M15 2c-1 7 4 14 9 14s8-7 7-14z" fill="#a8d48b" /><path d="M20 2l3 14 3-14" stroke="#59a63c" /><path d="M22 18h4v4h-4z" fill="#a8d48b" /></>],
  ["Document scanner", "", <><rect x="1" y="0" width="30" height="32" rx="5" fill="#1630a8" /><path d="M6 5h20l-5 7H11zM8 13h16l3 12H5z" fill="#fff" /><path d="M10 15h12l2 8H8z" fill="#1f5fc9" /><path d="M13 20l9-5 1 6z" fill="#7ee0f5" /><path d="M5 27h22" stroke="#fff" strokeWidth="2" /></>],
  ["Chrome", "open", <><circle cx="16" cy="16" r="15" fill="#fbc116" /><path d="M16 16L3 8.500A15 15 0 0129 8.500z" fill="#e33b2e" /><path d="M16 1a15 15 0 0113 7.500H16z" fill="#e33b2e" /><path d="M3 8.500A15 15 0 0016 31l6-12-12-1z" fill="#2b9f4b" /><circle cx="16" cy="15" r="7" fill="#fff" /><circle cx="16" cy="15" r="5.500" fill="#3f7fe8" /><rect x="17" y="18" width="15" height="14" fill="#dcdcdc" /><circle cx="24.500" cy="22.500" r="2.500" fill="#8b8b8b" /><path d="M20 30c0-5 9-5 9 0z" fill="#8b8b8b" /></>],
  ["Photoshop", "", <Tile fill="#061a2b" stroke="#4cb8ee" text="Ps" color="#4cc4ff" />],
  ["Illustrator", "active", <Tile fill="#2a0e02" stroke="#e8821e" text="Ai" color="#f78f2b" size={16} />],
  ["File Explorer", "stack", <><path d="M1 4h9l2 3h9l1 2h9v21H1z" fill="#f4d978" /><path d="M2 9h28v20H2z" fill="#fbe9a0" /><path d="M4 3h7v3H4z" fill="#38a845" /><path d="M13 5h7v3h-7z" fill="#d1432f" /><path d="M21 7h7v3h-7z" fill="#3f8ae0" /><path d="M6 32V20h21v12h-5v-6H11v6z" fill="#8fd3f3" stroke="#5aaada" /></>],
];

const slot = {
  "": "border-transparent",
  open: "border-white/30 bg-white/20",
  active: "border-white/90 bg-white/50",
  stack: "mr-1 border-white/40 bg-white/20 shadow-[4px_0_0_-1px_#54748a]",
};

function Taskbar() {
  return (
    <footer className="flex h-10 shrink-0 items-stretch justify-between bg-linear-to-r from-[#1f4868] via-[#264d5f] via-40% to-[#285068]">
      <div className="flex">
        <button aria-label="Start" className="flex w-[50px] items-center justify-center">
          <Svg w={28} h={26}>
            <path d="M0 4l12-2v10.500H0zM13 1.800L28 0v12.500H13zM0 13.500h12V24L0 22zM13 13.500h15V26l-15-2z" fill="#fff" />
          </Svg>
        </button>
        {apps.map(([name, state, art]) => (
          <div key={name} className="flex w-[62px] px-0.5">
            <button aria-label={name} className={`flex grow items-center justify-center border ${slot[state]}`}>
              <Svg w={32} h={33}>{art}</Svg>
            </button>
          </div>
        ))}
      </div>
      <svg width="0" height="0" className="absolute" aria-hidden="true">
        <defs>
          <linearGradient id="bk" x1="0" y1="0" x2="0" y2="1"><stop stopColor="#f7c353" /><stop offset="1" stopColor="#b8281c" /></linearGradient>
        </defs>
      </svg>
      <div className="flex items-center text-xs text-white">
        <button aria-label="Show hidden icons" className="mr-1 flex"><Svg w={8} h={5}><path d="M0 5l4-5 4 5z" fill="#fff" /></Svg></button>
        <Svg w={16} h={15} className="ml-3.5"><path d="M6 3h9v8H6M10.500 11v3M7 14h8M1 1h4v4H1zM3 5v5h3" stroke="#fff" strokeWidth="1.500" /></Svg>
        <Svg w={15} h={14} className="ml-2"><path d="M0 4h3l4-4v14l-4-4H0z" fill="#fff" /><path d="M9 5c1 1 1 3 0 4M11 3c2.500 2 2.500 6 0 8M13 1c3.500 3 3.500 9 0 12" stroke="#fff" /></Svg>
        <Svg w={15} h={15} className="ml-2.5"><path d="M1 0v15" stroke="#fff" strokeWidth="1.500" /><path d="M2 1h6v2h6l-2 3 1 3H8V7H2z" fill="#fff" /></Svg>
        <span className="ml-3.5 w-9">ENG</span>
        <div className="mr-3 w-[60px] pt-1 text-center leading-[17px] whitespace-nowrap">
          <div>12:32 PM</div>
          <div>10/20/2018</div>
        </div>
      </div>
    </footer>
  );
}

export default function App() {
  return (
    <div className="relative flex h-screen flex-col overflow-hidden [font-family:'Open_Sans','Noto_Sans',sans-serif]">
      <MenuBar />
      <ControlBar />
      <div className="flex min-h-0 grow">
        <Toolbar />
        <Document />
        <Dock />
      </div>
      <Taskbar />
      <ActionsPanel />
      <PanelMenu />
    </div>
  );
}
